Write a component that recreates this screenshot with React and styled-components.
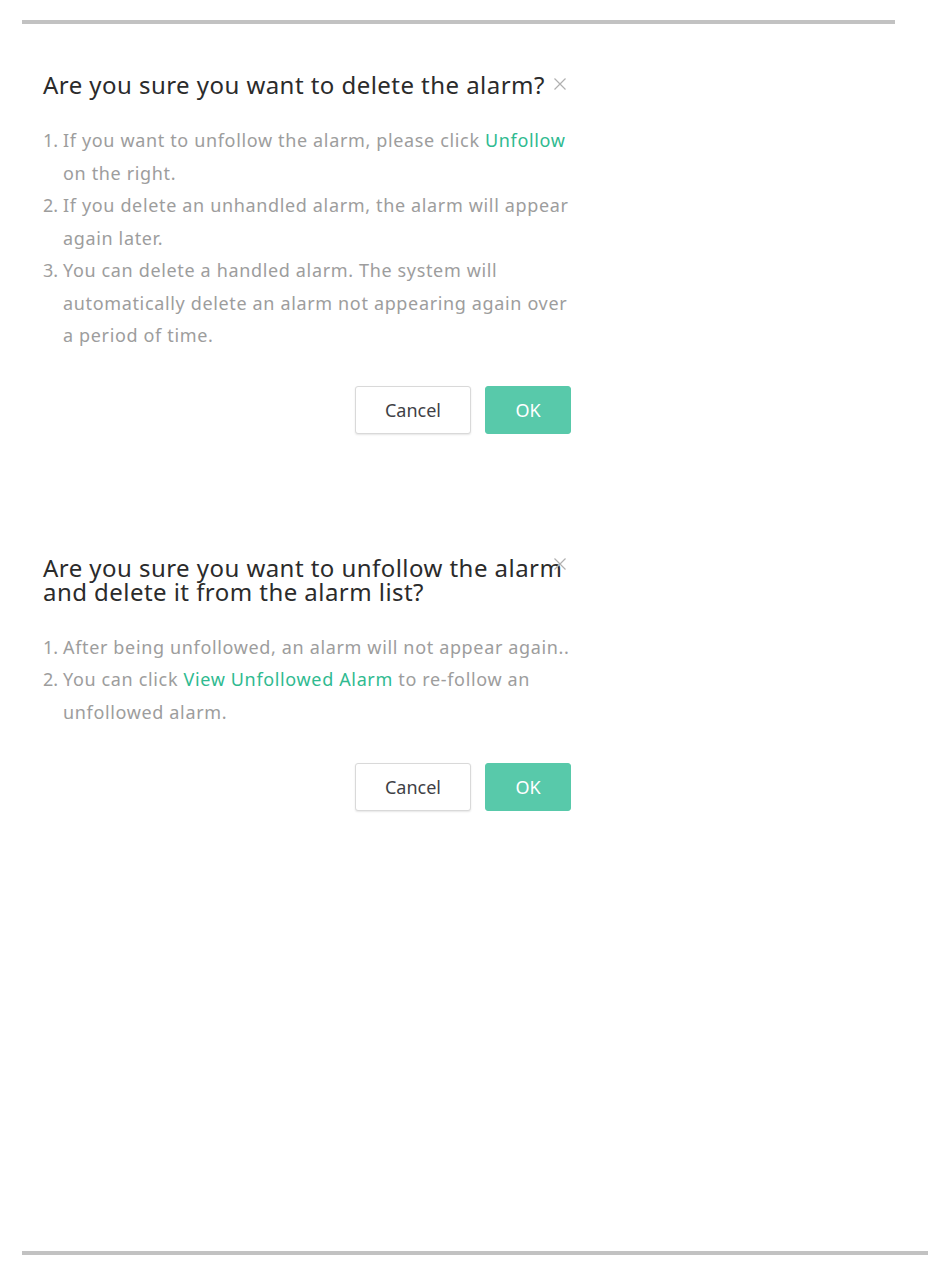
import styled, { createGlobalStyle } from 'styled-components';

const GlobalStyle = createGlobalStyle`
    * {
        box-sizing: border-box;
    }

    body {
        margin: 0;
        background: #ffffff;
        font-family: "Noto Sans", "Open Sans", sans-serif;
    }
`

const Page = styled.div`
    min-height: 1276px;
    display: flex;
    flex-direction: column;
    padding: 20px 0 21px 22px;
`

const Rule = styled.div`
    height: 4px;
    width: ${(props) => props.width}px;
    background-color: #c2c2c2;
`

const BottomRule = styled(Rule)`
    margin-top: auto;
`

const Dialog = styled.section`
    width: 528px;
    margin: ${(props) => props.top}px 0 0 21px;
    display: flex;
    flex-direction: column;
`

const Header = styled.div`
    position: relative;

    h2 {
        margin: 0;
        font-weight: 400;
        color: #2b2b2b;
        font-size: 24px;
        line-height: ${(props) => props.lh}px;
        letter-spacing: 0.45px;
    }
`

const Close = styled.span`
    position: absolute;
    right: 4px;
    top: ${(props) => props.top}px;
    width: 14px;
    height: 14px;
    display: flex;

    svg {
        width: 14px;
        height: 14px;
    }
`

const Steps = styled.ol`
    margin: ${(props) => props.gap}px 0 0;
    padding: 0;
    list-style: none;
`

const Step = styled.li`
    display: flex;
    font-size: 18px;
    line-height: 32.5px;
    color: #9d9d9d;
    letter-spacing: 0.65px;

    a {
        color: #2fba90;
        text-decoration: none;
    }
`

const Num = styled.span`
    flex: 0 0 20px;
    letter-spacing: 0;
`

const Actions = styled.div`
    margin-top: ${(props) => props.gap}px;
    display: flex;
    justify-content: flex-end;
    gap: 14px;
`

const Button = styled.button`
    height: 48px;
    width: ${(props) => (props.$primary ? '86px' : '116px')};
    border-radius: 3px;
    font-family: "Noto Sans", sans-serif;
    font-size: 18px;
    border: 1px solid ${(props) => (props.$primary ? '#58c9aa' : '#d9d9d9')};
    background-color: ${(props) => (props.$primary ? '#58c9aa' : '#ffffff')};
    color: ${(props) => (props.$primary ? '#ffffff' : '#3f3f46')};
    box-shadow: ${(props) => (props.$primary ? 'none' : '0 1px 2px #e6e6e6')};
    cursor: pointer;
`

function CloseIcon() {
    return (
        <svg viewBox="0 0 14 14">
            <path d="M1.5 1.5 L12.5 12.5 M12.5 1.5 L1.5 12.5" stroke="#b0b0b0" strokeWidth="1.2" fill="none" />
        </svg>
    )
}

export default function App() {
    return (
        <>
            <GlobalStyle />
            <Page>
                <Rule width={873} />

                <Dialog top={46}>
                    <Header lh={30}>
                        <h2>Are you sure you want to delete the alarm?</h2>
                        <Close top={7}><CloseIcon /></Close>
                    </Header>
                    <Steps gap={24}>
                        <Step><Num>1.</Num><span>If you want to unfollow the alarm, please click <a href="#">Unfollow</a> on the right.</span></Step>
                        <Step><Num>2.</Num><span>If you delete an unhandled alarm, the alarm will appear again later.</span></Step>
                        <Step><Num>3.</Num><span>You can delete a handled alarm. The system will automatically delete an alarm not appearing again over a period of time.</span></Step>
                    </Steps>
                    <Actions gap={34}>
                        <Button>Cancel</Button>
                        <Button $primary>OK</Button>
                    </Actions>
                </Dialog>

                <Dialog top={122}>
                    <Header lh={24}>
                        <h2>Are you sure you want to unfollow the alarm and delete it from the alarm list?</h2>
                        <Close top={1}><CloseIcon /></Close>
                    </Header>
                    <Steps gap={27}>
                        <Step><Num>1.</Num><span>After being unfollowed, an alarm will not appear again..</span></Step>
                        <Step><Num>2.</Num><span>You can click <a href="#">View Unfollowed Alarm</a> to re-follow an unfollowed alarm.</span></Step>
                    </Steps>
                    <Actions gap={35}>
                        <Button>Cancel</Button>
                        <Button $primary>OK</Button>
                    </Actions>
                </Dialog>

                <BottomRule width={906} />
            </Page>
        </>
    )
}
